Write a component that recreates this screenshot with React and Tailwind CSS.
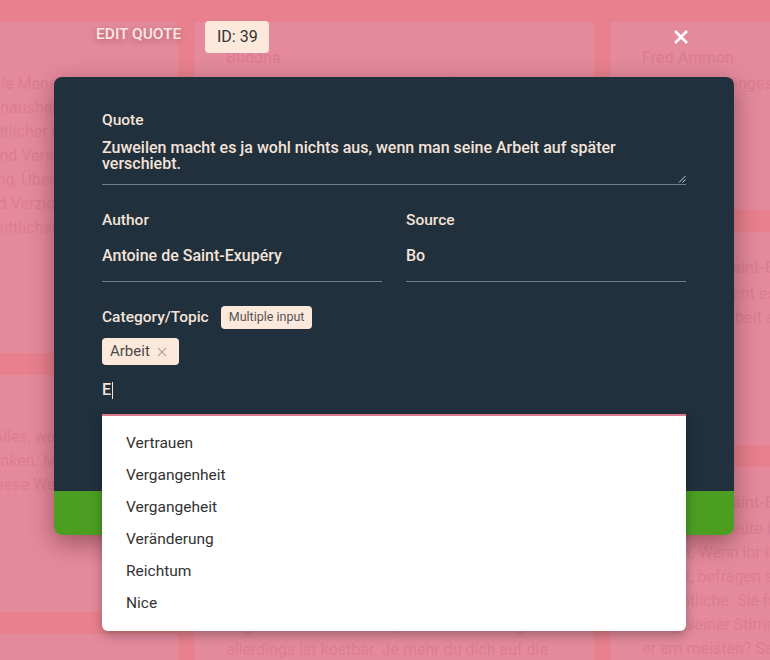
import React from 'react';

const columns = [
  [
    {
      h: 331,
      author: 'Buddha',
      lines: [
        'Wer über sich selbst und alle Menschen',
        'sich über das Alltägliche hinaushebt, der',
        'der ist frei von jeglicher weltlicher Gier,',
        'Lust, von jeglichem Hass und Versuchung,',
        'von Verblendung, Täuschung, Überheblichkeit',
        'Eitelkeit. Er lebt in Ruhe und Verzicht, der',
        'ist wohl der Weiseste und sittlichster Mensch.',
      ],
    },
    {
      h: 237,
      author: 'Buddha',
      lines: [
        'Wir sind, was wir denken. Alles, was',
        'entsteht aus unseren Gedanken. Mit',
        'Gedanken erschaffen wir diese Welt.',
      ],
    },
    { h: 200, author: 'Laozi', lines: ['Eine Reise von tausend Meilen beginnt'] },
  ],
  [
    {
      h: 304,
      author: 'Buddha',
      lines: [
        'Das Geheimnis der Gesundheit für Geist und',
        'Körper ist es, nicht um die Vergangenheit zu',
        'trauern, sich nicht um die Zukunft zu sorgen',
        'und nicht Schwierigkeiten vorwegzunehmen,',
        'sondern im gegenwärtigen Augenblick weise',
        'und ernsthaft zu leben.',
      ],
    },
    {
      h: 400,
      author: 'Seneca',
      lines: [
        'Nicht weil es schwer ist, wagen wir es nicht,',
        'sondern weil wir es nicht wagen, ist es',
        'schwer. Es ist nicht wenig Zeit, die wir',
        'haben, sondern es ist viel Zeit, die wir nicht',
        'nutzen. Das Leben ist lang, wenn man es zu',
        'nutzen weiß. Wer keinen Hafen kennt, für',
        'den ist kein Wind der richtige. Solange du',
        'lebst, lerne, wie man lebt. Die Zeit, die wir',
        'verschwenden, kehrt niemals zurück. Jeder',
        'Tag ist ein neues Leben, die Zeit eines Tages',
        'allerdings ist kostbar. Je mehr du dich auf die',
      ],
    },
  ],
  [
    {
      h: 188,
      author: 'Fred Ammon',
      lines: ['Das ist allerdinges wert, dass man', 'es tut.'],
    },
    {
      h: 213,
      author: 'Antoine de Saint-Exupéry',
      lines: ['Zuweilen macht es ja wohl nichts aus, wenn', 'man seine Arbeit auf später verschiebt.'],
    },
    {
      h: 300,
      author: 'Antoine de Saint-Exupéry',
      lines: [
        'Die großen Leute haben eine Vorliebe für',
        'Zahlen. Wenn ihr ihnen von einem neuen',
        'erzählt, befragen sie euch nie über das',
        'Wesentliche. Sie fragen euch nie: Wie ist',
        'Klang seiner Stimme? Welche Spiele liebt',
        'er am meisten? Sammelt er Schmetterlinge?',
      ],
    },
  ],
];

const suggestions = ['Vertrauen', 'Vergangenheit', 'Vergangeheit', 'Veränderung', 'Reichtum', 'Nice'];

const QuoteCard = ({ card }) => (
  <div
    className="shrink-0 overflow-hidden rounded bg-[#e58a9d] px-8 pt-6 text-[16px] text-[#db7e93]"
    style={{ height: card.h }}
  >
    <div className="h-6 whitespace-nowrap font-medium leading-6">{card.author}</div>
    <div className="mt-[2px]">
      {card.lines.map((line, i) => (
        <div key={i} className="h-6 whitespace-nowrap leading-6">
          {line}
        </div>
      ))}
    </div>
  </div>
);

const App = () => {
  return (
    <div className="relative h-[660px] w-[770px] overflow-hidden bg-[#e8818d] font-['Roboto',sans-serif]">
      {/* page behind the dialog */}
      <div className="-ml-[222px] flex gap-4 pt-[22px]">
        {columns.map((col, ci) => (
          <div key={ci} className="flex w-[400px] shrink-0 flex-col gap-[22px]">
            {col.map((card, i) => (
              <QuoteCard key={i} card={card} />
            ))}
          </div>
        ))}
      </div>

      {/* edit dialog */}
      <div className="absolute inset-0">
        <div className="ml-[54px] w-[680px]">
          <div className="mt-[21px] mb-[24px] flex h-[32px] items-center pl-[42px] pr-[45px]">
            <span className="-mt-[4px] text-[15.5px] font-medium uppercase text-[#fbe9e2] [text-shadow:0_2px_6px_rgba(80,0,20,0.35)]">
              Edit Quote
            </span>
            <span className="ml-6 flex h-[32px] w-[64px] items-center justify-center rounded bg-[#fde8dc] text-[16px] text-[#333]">
              ID: 39
            </span>
            <svg className="ml-auto" width="16" height="16" viewBox="0 0 16 16">
              <path d="M2 2 L14 14 M14 2 L2 14" stroke="#fff" strokeWidth="2.6" strokeLinecap="butt" />
            </svg>
          </div>

          <div className="rounded-lg shadow-[0_8px_26px_rgba(40,0,10,0.4)]">
            <div className="rounded-t-lg bg-[#20303c] px-12 pt-[34px] pb-[75px] text-[#f4e3d9]">
              <div className="h-[18px] text-[15.5px] font-medium leading-[18px]">Quote</div>
              <div className="relative mt-[9px] h-[47px] border-b border-[#717b83] pt-[2px] text-[16px] font-medium leading-4">
                Zuweilen macht es ja wohl nichts aus, wenn man seine Arbeit auf später
                <br />
                verschiebt.
                <svg className="absolute bottom-[1px] right-0" width="8" height="8" viewBox="0 0 8 8">
                  <path d="M7.5 1 L1 7.5 M7.5 4.5 L4.5 7.5" stroke="#c9cdd0" strokeWidth="1" />
                </svg>
              </div>

              <div className="mt-[26px] grid grid-cols-2 gap-6">
                <div>
                  <div className="h-[18px] text-[15.5px] font-medium leading-[18px]">Author</div>
                  <div className="mt-[19px] h-[34px] border-b border-[#717b83] text-[16px] font-medium leading-4">
                    Antoine de Saint-Exupéry
                  </div>
                </div>
                <div>
                  <div className="h-[18px] text-[15.5px] font-medium leading-[18px]">Source</div>
                  <div className="mt-[19px] h-[34px] border-b border-[#717b83] text-[16px] font-medium leading-4">
                    Bo
                  </div>
                </div>
              </div>

              <div className="mt-[24px] flex h-[23px] items-center gap-3">
                <span className="text-[15.5px] font-medium">Category/Topic</span>
                <span className="flex h-[23px] items-center rounded bg-[#fde8dc] px-2 text-[12.5px] text-[#555]">
                  Multiple input
                </span>
              </div>

              <div className="mt-[9px] flex">
                <span className="flex h-[27px] items-center gap-[7px] rounded bg-[#fde8dc] pl-2 pr-3 text-[15px] text-[#4a4a4a]">
                  Arbeit
                  <svg width="10" height="10" viewBox="0 0 10 10">
                    <path d="M1 1 L9 9 M9 1 L1 9" stroke="#b3aaa5" strokeWidth="1.3" />
                  </svg>
                </span>
              </div>

              <div className="relative mt-[13px] border-b-2 border-[#e97f94] pb-3">
                <div className="flex h-6 items-center text-[16px] font-medium leading-6">
                  E<span className="ml-[1px] h-[17px] w-px bg-[#f4e3d9]" />
                </div>
                <div className="absolute left-0 right-0 top-[calc(100%+2px)] z-10 rounded-b-md bg-white pt-[12px] pb-[11px] shadow-[0_4px_12px_rgba(0,0,0,0.3)]">
                  {suggestions.map((s) => (
                    <div key={s} className="flex h-8 items-center px-6 text-[15.5px] text-[#333]">
                      {s}
                    </div>
                  ))}
                </div>
              </div>
            </div>
            <div className="h-[44px] rounded-b-lg bg-[#4b9e22]" />
          </div>
        </div>
      </div>
    </div>
  );
};

export default App;
